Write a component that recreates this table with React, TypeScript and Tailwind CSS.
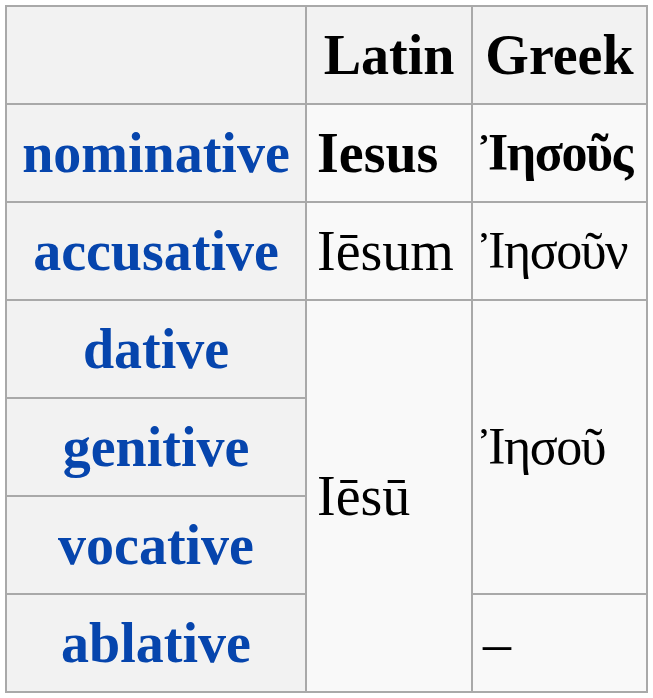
import React from "react";

const th = "border-2 border-[#a9a9a9] bg-[#f2f2f2] text-center align-middle font-bold px-[10px]";
const td = "border-2 border-[#a9a9a9] bg-[#f9f9f9] text-left align-middle px-[10px]";
const gr = "border-2 border-[#a9a9a9] bg-[#f9f9f9] text-left align-middle pl-[8px] pr-0 whitespace-nowrap text-[52px] tracking-[-1.5px]";
const lab = "text-[#0645ad]";

export default function App() {
  return (
    <div className="p-[5px] bg-white min-h-screen">
      <table
        className="border-collapse table-fixed text-black text-[56px] leading-none"
        style={{ fontFamily: '"Liberation Serif", serif', width: 643 }}
      >
        <colgroup>
          <col className="w-[300px]" />
          <col className="w-[166px]" />
          <col className="w-[175px]" />
        </colgroup>
        <tbody>
          <tr className="h-[98px]">
            <th className={th}></th>
            <th className={th}>Latin</th>
            <th className={th}>Greek</th>
          </tr>
          <tr className="h-[98px]">
            <th className={th}><span className={lab}>nominative</span></th>
            <td className={td + " font-bold"}>Iesus</td>
            <td className={gr + " font-bold"}>Ἰησοῦς</td>
          </tr>
          <tr className="h-[98px]">
            <th className={th}><span className={lab}>accusative</span></th>
            <td className={td}>Iēsum</td>
            <td className={gr}>Ἰησοῦν</td>
          </tr>
          <tr className="h-[98px]">
            <th className={th}><span className={lab}>dative</span></th>
            <td className={td} rowSpan={4}>Iēsū</td>
            <td className={gr} rowSpan={3}>Ἰησοῦ</td>
          </tr>
          <tr className="h-[98px]">
            <th className={th}><span className={lab}>genitive</span></th>
          </tr>
          <tr className="h-[98px]">
            <th className={th}><span className={lab}>vocative</span></th>
          </tr>
          <tr className="h-[98px]">
            <th className={th}><span className={lab}>ablative</span></th>
            <td className={td}>–</td>
          </tr>
        </tbody>
      </table>
    </div>
  );
}
